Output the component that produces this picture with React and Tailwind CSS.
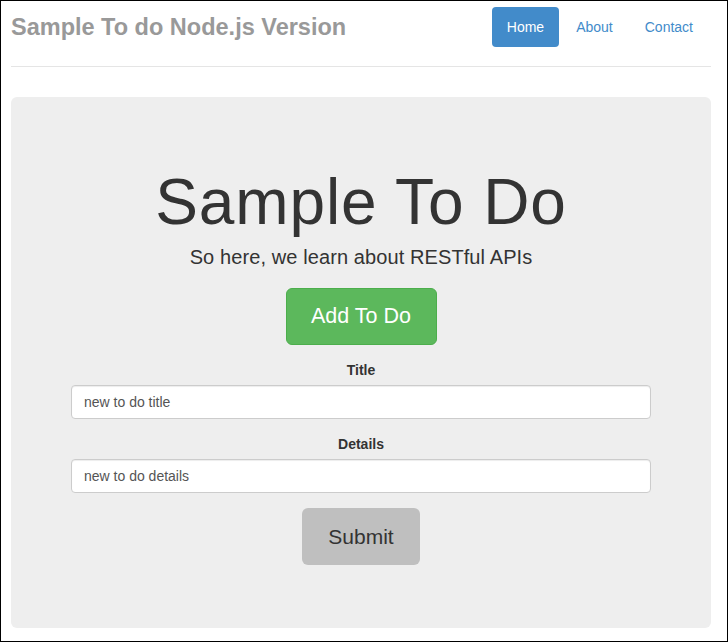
export default function App() {
  const links = ["Home", "About", "Contact"];

  return (
    <div
      className="w-[728px] h-[642px] border border-black bg-white pl-[10px] pr-[16px] pt-[6px] overflow-hidden"
      style={{ fontFamily: '"Liberation Sans", Arial, sans-serif' }}
    >
      {/* HEADER */}
      <div className="flex justify-between items-start pb-[19px] border-b border-[#e5e5e5]">
        <h3 className="text-[23.5px] leading-[36px] font-bold text-[#999] mt-[2px]">
          Sample To do Node.js Version
        </h3>

        <ul className="flex gap-[2px] mr-[3px]">
          {links.map((link, i) => (
            <li key={link}>
              <a
                href="#"
                className={
                  i === 0
                    ? "block px-[15px] py-[10px] text-[14px] leading-[20px] rounded-[4px] bg-[#428bca] text-white"
                    : "block px-[15px] py-[10px] text-[14px] leading-[20px] rounded-[4px] text-[#428bca]"
                }
              >
                {link}
              </a>
            </li>
          ))}
        </ul>
      </div>

      {/* JUMBOTRON */}
      <div className="mt-[30px] rounded-[6px] bg-[#eeeeee] px-[60px] pt-[70px] pb-[63px] text-center">
        <h1 className="text-[64px] leading-[70px] tracking-[0.9px] text-[#333]">Sample To Do</h1>
        <p className="mt-[8px] text-[20px] leading-[24px] tracking-[0.1px] text-[#333]">
          So here, we learn about RESTful APIs
        </p>

        <button className="mt-[19px] w-[151px] h-[57px] rounded-[6px] bg-[#5cb85c] border border-[#4cae4c] text-white text-[21.5px]">
          Add To Do
        </button>

        <div className="mt-[15px]">
          <label className="block text-[14px] leading-[20px] font-bold text-[#333] mb-[5px]">
            Title
          </label>
          <input
            type="text"
            defaultValue="new to do title"
            className="block w-full h-[34px] px-[12px] text-[14px] text-[#555] bg-white border border-[#ccc] rounded-[4px] shadow-[inset_0_1px_1px_rgba(0,0,0,0.075)] outline-none"
          />
        </div>

        <div className="mt-[15px]">
          <label className="block text-[14px] leading-[20px] font-bold text-[#333] mb-[5px]">
            Details
          </label>
          <input
            type="text"
            defaultValue="new to do details"
            className="block w-full h-[34px] px-[12px] text-[14px] text-[#555] bg-white border border-[#ccc] rounded-[4px] shadow-[inset_0_1px_1px_rgba(0,0,0,0.075)] outline-none"
          />
        </div>

        <button className="mt-[15px] w-[118px] h-[57px] rounded-[6px] bg-[#bfbfbf] text-[#333] text-[21px]">
          Submit
        </button>
      </div>
    </div>
  );
}
